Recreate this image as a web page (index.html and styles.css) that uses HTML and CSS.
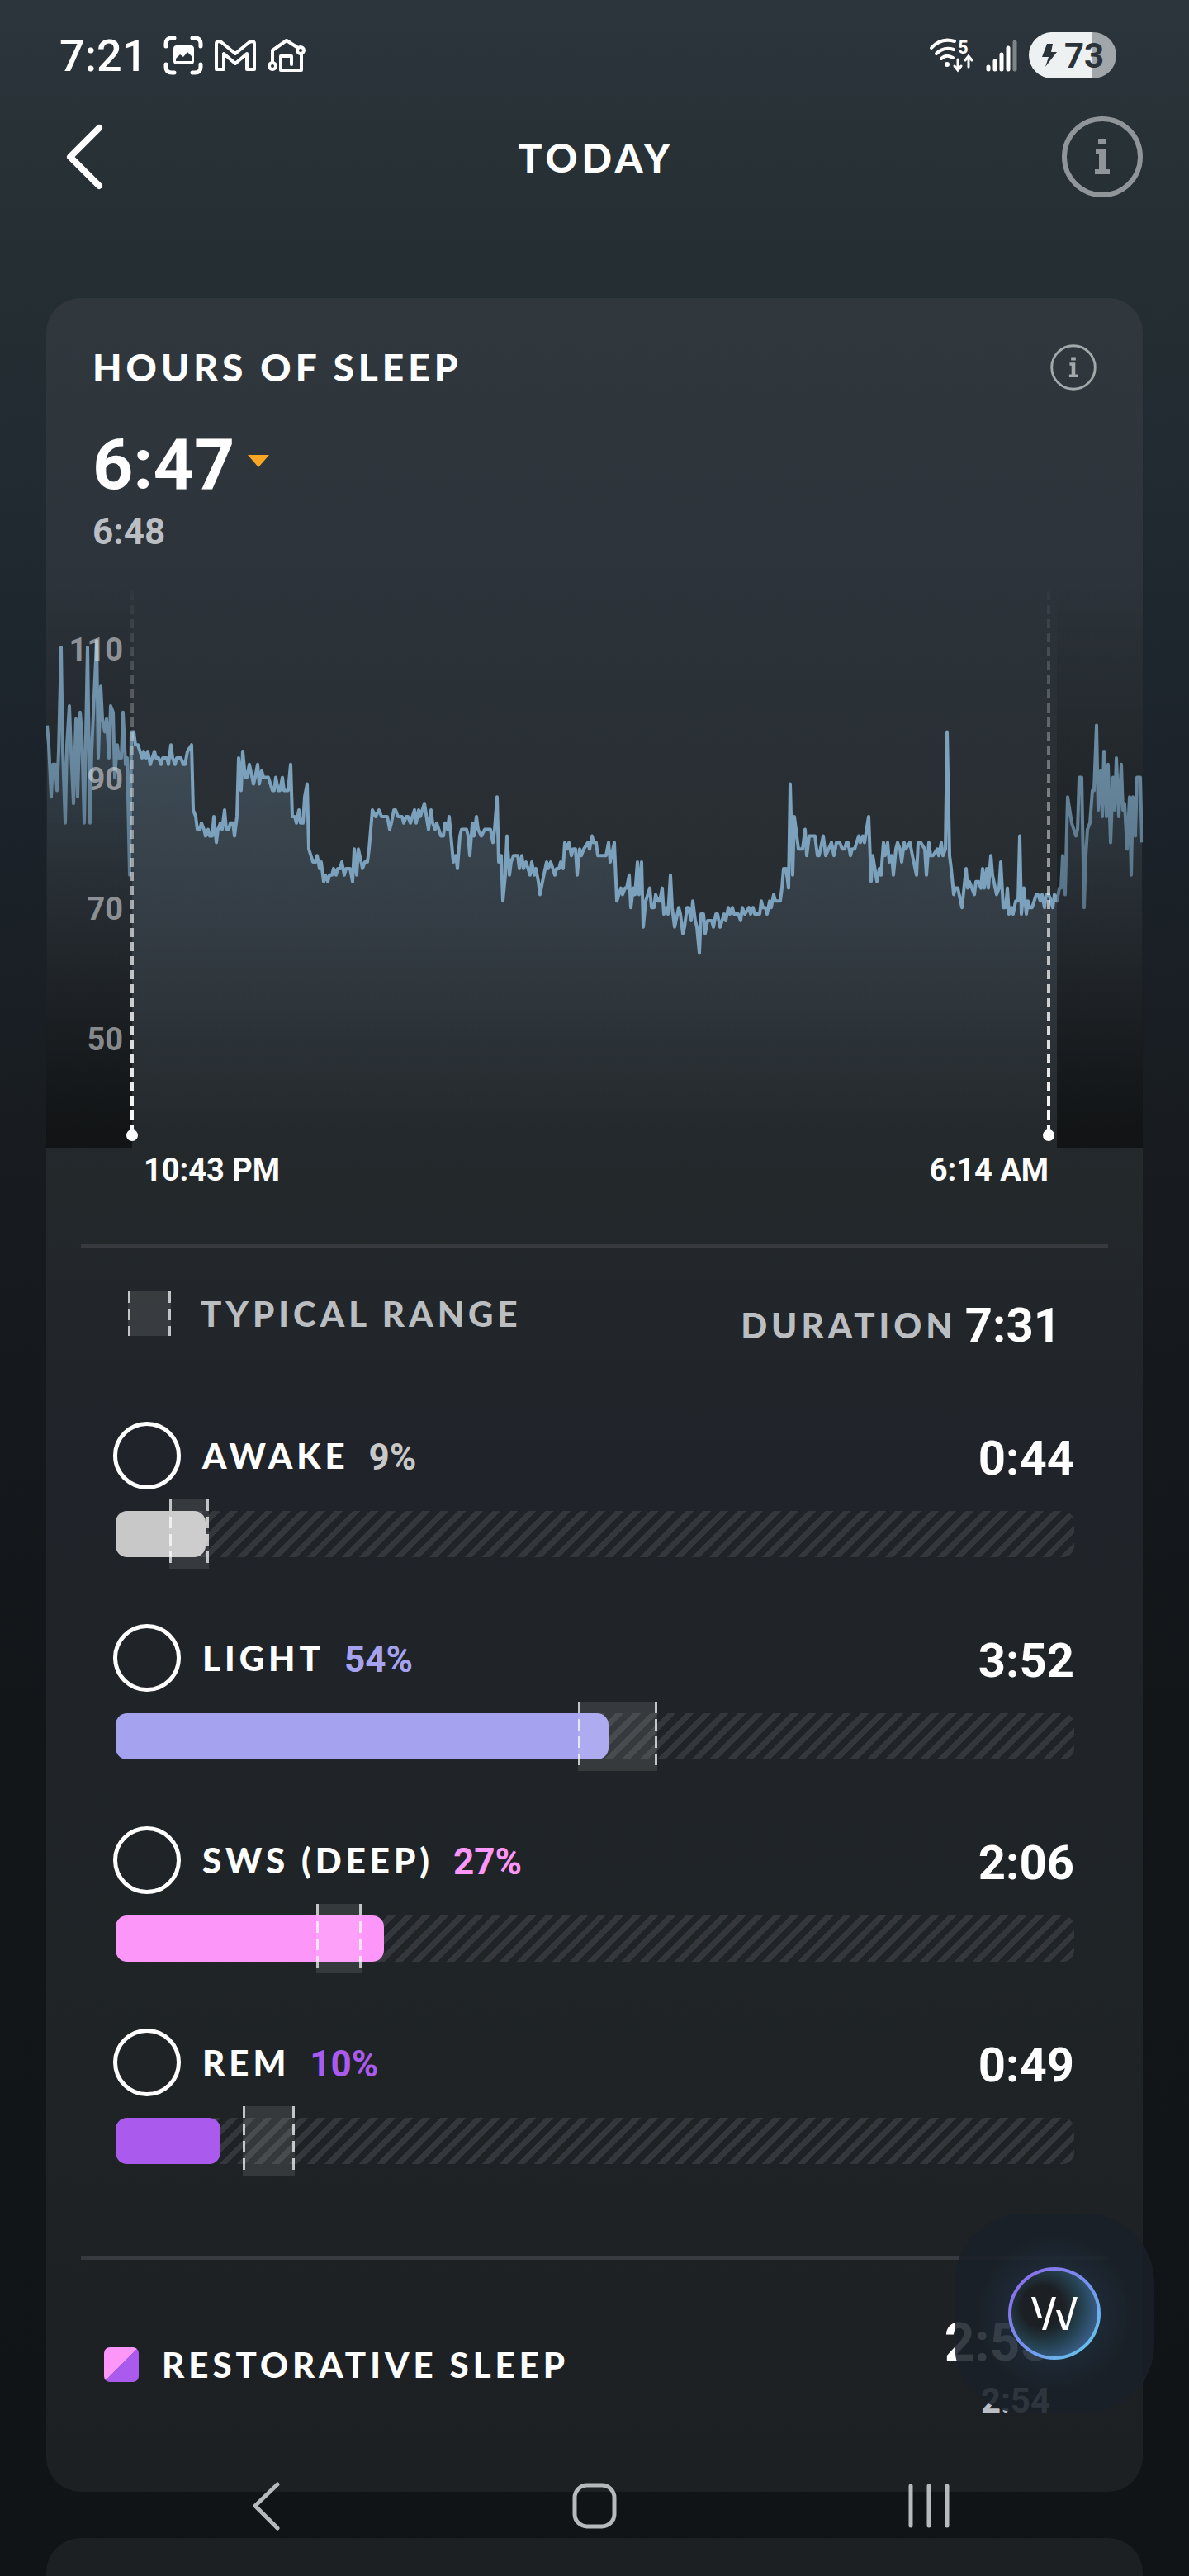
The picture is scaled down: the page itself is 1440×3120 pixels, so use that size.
FILE: index.html
```
<!DOCTYPE html>
<html lang="en">
<head>
    <meta charset="UTF-8">
    <meta name="viewport" content="width=device-width, initial-scale=1.0">
    <title>Hours of Sleep</title>
    <link rel="stylesheet" href="styles.css">
</head>
<body>
    <div class="status-bar">
        <div class="status-left">
            <span class="clock">7:21</span>
            <svg class="status-icon" width="48" height="48" viewBox="0 0 48 48" fill="none" stroke="#fff" stroke-width="5" stroke-linecap="round">
                <path d="M3 13V10Q3 3 10 3H13M35 3H38Q45 3 45 10V13M45 35V38Q45 45 38 45H35M13 45H10Q3 45 3 38V35"/>
                <path fill="#fff" stroke="none" fill-rule="evenodd" d="M16 12H33Q37 12 37 16V31Q37 35 33 35H16Q12 35 12 31V16Q12 12 16 12ZM15 28V31H34V25L29 20L24 26L20 23Z"/>
            </svg>
            <svg class="status-icon" width="50" height="38" viewBox="0 0 50 38" fill="none" stroke="#fff" stroke-width="4" stroke-linejoin="round">
                <path d="M2 5Q2 2 5 2L8 3L25 17L42 3L45 2Q48 2 48 5V36H39V17L25 29L11 17V36H2Z"/>
            </svg>
            <svg class="status-icon" width="46" height="40" viewBox="0 0 46 40" fill="none" stroke="#fff" stroke-width="4" stroke-linejoin="round" stroke-linecap="round">
                <circle cx="6" cy="33" r="4"/>
                <circle cx="40" cy="14" r="4"/>
                <path d="M6 28V14L23 2L37 11M41 19V38H16V21H29V31"/>
            </svg>
        </div>
        <div class="status-right">
            <svg class="wifi" width="54" height="40" viewBox="0 0 54 40" fill="none" stroke="#fff" stroke-width="4" stroke-linecap="round">
                <path d="M2 11Q14 -2 30 3M8 18Q17 9 29 13M14 24Q20 18 28 23"/>
                <circle cx="21" cy="31" r="3" fill="#fff" stroke="none"/>
                <path stroke-width="3" d="M34 25V37M30 33L34 38L38 33M47 34V22M43 26L47 21L51 26"/>
                <text class="wifi-band" x="34" y="18">5</text>
            </svg>
            <svg width="38" height="40" viewBox="0 0 38 40" stroke="#fff" stroke-width="5" stroke-linecap="round">
                <path d="M3 34V37M11 27V37M19 19V37M27 11V37"/>
                <path d="M35 4V37" opacity=".4"/>
            </svg>
            <div class="battery">
                <svg width="20" height="30" viewBox="0 0 20 30" fill="#2b333a">
                    <path d="M7 1H14L12 11H19L5 29L9 17H1Z"/>
                </svg>
                <span>73</span>
            </div>
        </div>
    </div>

    <header class="top-bar">
        <button class="icon-button" aria-label="Back">
            <svg width="48" height="82" viewBox="0 0 48 82" fill="none" stroke="#fff" stroke-width="8" stroke-linecap="round" stroke-linejoin="round">
                <path d="M42 6L7 41L42 76"/>
            </svg>
        </button>
        <h1>TODAY</h1>
        <button class="icon-button" aria-label="About today">
            <svg width="98" height="98" viewBox="0 0 98 98" fill="none" stroke="#8f9599" stroke-width="6">
                <circle cx="49" cy="49" r="46"/>
                <path fill="#8f9599" stroke="none" d="M44 27H54V34H44ZM41 39H53V64H58V70H40V64H45V45H41Z"/>
            </svg>
        </button>
    </header>

    <main>
        <section class="card sleep-card">
            <div class="card-head">
                <h2>HOURS OF SLEEP</h2>
                <button class="icon-button" aria-label="About hours of sleep">
                    <svg width="56" height="56" viewBox="0 0 98 98" fill="none" stroke="#a3a8ab" stroke-width="5">
                        <circle cx="49" cy="49" r="46"/>
                        <path fill="#a3a8ab" stroke="none" d="M44 27H54V34H44ZM41 39H53V64H58V70H40V64H45V45H41Z"/>
                    </svg>
                </button>
            </div>
            <div class="total">
                <span class="total-value">6:47</span>
                <svg class="trend" width="26" height="15" viewBox="0 0 26 15" fill="#faa526"><path d="M0 0H26L13 15Z"/></svg>
            </div>
            <div class="total-average">6:48</div>

            <svg class="chart" viewBox="0 0 1328 690" role="img" aria-label="Heart rate during sleep">
                <defs>
                    <linearGradient id="areaFill" gradientUnits="userSpaceOnUse" x1="0" y1="180" x2="0" y2="670">
                        <stop offset="0" stop-color="#7ba1bc" stop-opacity=".26"/>
                        <stop offset=".5" stop-color="#7b93b0" stop-opacity=".15"/>
                        <stop offset="1" stop-color="#7b93b0" stop-opacity="0"/>
                    </linearGradient>
                    <linearGradient id="shadeFill" x1="0" y1="0" x2="0" y2="1">
                        <stop offset="0" stop-color="#000" stop-opacity="0"/>
                        <stop offset=".5" stop-color="#000" stop-opacity=".25"/>
                        <stop offset="1" stop-color="#000" stop-opacity=".52"/>
                    </linearGradient>
                    <linearGradient id="markerFill" gradientUnits="userSpaceOnUse" x1="0" y1="0" x2="0" y2="670">
                        <stop offset="0" stop-color="#fff" stop-opacity="0"/>
                        <stop offset=".5" stop-color="#fff" stop-opacity=".5"/>
                        <stop offset="1" stop-color="#fff"/>
                    </linearGradient>
                </defs>
                <path id="area" fill="url(#areaFill)"/>
                <path id="line" class="chart-line"/>
                <rect x="0" y="0" width="104" height="690" fill="url(#shadeFill)"/>
                <rect x="1224" y="0" width="104" height="690" fill="url(#shadeFill)"/>
                <g class="axis">
                    <text x="93" y="100">110</text>
                    <text x="93" y="257">90</text>
                    <text x="93" y="414">70</text>
                    <text x="93" y="572">50</text>
                </g>
                <path class="marker" d="M104 16V672L105 672M1214 16V672L1215 672" stroke="url(#markerFill)"/>
                <circle cx="104" cy="675" r="7" fill="#fff"/>
                <circle cx="1214" cy="675" r="7" fill="#fff"/>
            </svg>
            <div class="times">
                <span>10:43 PM</span>
                <span>6:14 AM</span>
            </div>

            <hr>

            <div class="legend">
                <div class="legend-range">
                    <span class="swatch"></span>
                    <span>TYPICAL RANGE</span>
                </div>
                <div class="legend-duration">
                    <span>DURATION</span>
                    <span class="duration">7:31</span>
                </div>
            </div>

            <div class="stages">
                <div class="stage awake">
                    <div class="stage-head">
                        <input type="checkbox" id="awake">
                        <label for="awake">AWAKE</label>
                        <span class="percent">9%</span>
                        <span class="duration">0:44</span>
                    </div>
                    <div class="track">
                        <div class="fill" style="width: 9.4%"></div>
                        <div class="range" style="left: 5.6%; width: 4.1%"></div>
                    </div>
                </div>
                <div class="stage light">
                    <div class="stage-head">
                        <input type="checkbox" id="light">
                        <label for="light">LIGHT</label>
                        <span class="percent">54%</span>
                        <span class="duration">3:52</span>
                    </div>
                    <div class="track">
                        <div class="fill" style="width: 51.4%"></div>
                        <div class="range" style="left: 48.2%; width: 8.3%"></div>
                    </div>
                </div>
                <div class="stage deep">
                    <div class="stage-head">
                        <input type="checkbox" id="deep">
                        <label for="deep">SWS (DEEP)</label>
                        <span class="percent">27%</span>
                        <span class="duration">2:06</span>
                    </div>
                    <div class="track">
                        <div class="fill" style="width: 28%"></div>
                        <div class="range" style="left: 20.9%; width: 4.8%"></div>
                    </div>
                </div>
                <div class="stage rem">
                    <div class="stage-head">
                        <input type="checkbox" id="rem">
                        <label for="rem">REM</label>
                        <span class="percent">10%</span>
                        <span class="duration">0:49</span>
                    </div>
                    <div class="track">
                        <div class="fill" style="width: 10.9%"></div>
                        <div class="range" style="left: 13.3%; width: 5.4%"></div>
                    </div>
                </div>
            </div>

            <hr>

            <div class="restorative">
                <span class="restorative-swatch"></span>
                <span class="restorative-label">RESTORATIVE SLEEP</span>
                <div class="restorative-values">
                    <span class="current">2:55</span>
                    <span class="average">2:54</span>
                </div>
            </div>
        </section>

        <section class="card next-card"></section>
    </main>

    <div class="coach">
        <button class="coach-button" aria-label="Open coach">
            <svg width="56" height="40" viewBox="0 0 56 40" fill="#fff">
                <path d="M0 0H5L13 25H8ZM25 0H30L18 40H13ZM30 16H35L42 35L51 0H56L44 40H38Z"/>
            </svg>
        </button>
    </div>

    <nav class="system-nav">
        <button class="icon-button" aria-label="System back">
            <svg width="36" height="60" viewBox="0 0 36 60" fill="none" stroke="#b7babc" stroke-width="5" stroke-linecap="round" stroke-linejoin="round">
                <path d="M32 4L5 30L32 57"/>
            </svg>
        </button>
        <button class="icon-button" aria-label="Home">
            <svg width="54" height="56" viewBox="0 0 54 56" fill="none" stroke="#b7babc" stroke-width="5">
                <rect x="3" y="3" width="48" height="50" rx="15"/>
            </svg>
        </button>
        <button class="icon-button" aria-label="Recent apps">
            <svg width="50" height="56" viewBox="0 0 50 56" fill="none" stroke="#b7babc" stroke-width="5" stroke-linecap="round">
                <path d="M3 4V52M25 4V52M47 4V52"/>
            </svg>
        </button>
    </nav>

    <script>
        // [x, bpm] samples
        const samples = [
            [1,98],[3,95],[6,87],[8,92],[11,92],[13,88],[15,94],[18,110],[20,94],[23,83],[25,95],[28,101],[30,94],[33,86],[36,99],[38,87],
            [41,100],[43,97],[46,83],[50,110],[53,83],[55,94],[61,111],[63,93],[66,104],[68,99],[71,97],[73,99],[76,93],[78,101],[81,100],[83,90],
            [86,95],[88,93],[91,93],[93,100],[96,92],[98,93],[101,75],[103,97],[106,97],[108,95],[111,95],[116,93],[118,94],[121,93],[123,94],[126,92],
            [131,94],[133,93],[136,93],[139,92],[141,93],[146,93],[148,92],[151,95],[153,93],[156,92],[158,93],[163,93],[166,92],[168,92],[171,94],[176,95],
            [178,85],[181,84],[183,82],[186,82],[188,83],[191,82],[193,81],[196,82],[198,81],[201,81],[203,84],[206,80],[208,82],[211,83],[213,82],[216,85],
            [218,82],[221,82],[223,83],[226,83],[228,81],[231,84],[233,93],[236,88],[238,94],[241,90],[243,90],[246,92],[251,89],[253,90],[256,92],[258,89],
            [261,91],[263,90],[269,90],[274,88],[276,88],[278,90],[281,88],[283,88],[286,90],[288,88],[293,88],[296,92],[298,84],[301,84],[303,83],[306,85],
            [308,83],[311,83],[313,87],[316,89],[318,79],[323,77],[326,77],[328,78],[331,76],[333,77],[336,74],[338,75],[341,74],[343,75],[346,75],[348,76],
            [351,75],[353,76],[356,76],[358,77],[361,75],[363,76],[368,76],[371,74],[373,79],[376,75],[378,79],[383,76],[386,77],[389,77],[391,79],[395,85],
            [399,84],[403,85],[406,84],[413,84],[416,82],[418,83],[421,85],[423,85],[426,84],[431,84],[433,83],[436,84],[438,84],[441,83],[446,85],[448,83],
            [451,85],[453,84],[458,86],[463,82],[466,85],[468,83],[471,82],[473,83],[478,81],[481,81],[483,83],[486,82],[488,84],[493,77],[496,78],[498,76],
            [501,81],[503,82],[509,82],[511,81],[513,78],[516,83],[518,81],[521,84],[523,82],[527,81],[531,82],[538,82],[541,80],[543,82],[546,87],[548,77],
            [551,78],[553,71],[556,75],[558,81],[561,75],[563,77],[566,78],[571,78],[573,76],[576,78],[578,76],[581,77],[586,75],[588,77],[591,75],[593,76],
            [596,74],[598,72],[601,74],[606,77],[608,76],[611,77],[616,75],[618,76],[621,76],[623,77],[626,76],[628,80],[631,79],[633,80],[636,78],[638,79],
            [641,79],[643,75],[646,79],[648,78],[651,79],[656,80],[658,79],[661,81],[663,80],[666,80],[668,78],[678,78],[681,80],[683,77],[688,80],[691,71],
            [696,73],[698,72],[701,73],[703,73],[706,75],[708,70],[711,73],[713,72],[716,77],[718,72],[721,77],[723,67],[726,71],[731,73],[733,70],[736,70],
            [738,72],[741,71],[743,71],[746,73],[748,69],[751,70],[753,69],[756,75],[758,70],[761,67],[766,70],[768,69],[771,66],[773,67],[776,70],[778,70],
            [781,68],[783,71],[786,68],[788,67],[791,63],[793,69],[796,69],[798,66],[801,68],[806,68],[808,67],[811,69],[813,69],[816,67],[821,69],[823,68],
            [826,70],[828,69],[831,70],[833,69],[838,69],[841,68],[843,70],[846,69],[851,70],[853,69],[856,70],[858,69],[864,69],[866,71],[868,70],[871,70],
            [873,69],[876,71],[878,70],[881,72],[883,71],[889,71],[891,73],[893,76],[896,76],[899,73],[901,89],[904,75],[906,84],[911,79],[916,79],[919,82],
            [921,78],[924,81],[931,81],[934,78],[936,78],[941,81],[944,78],[951,80],[954,78],[957,80],[961,80],[964,79],[967,79],[969,80],[971,80],[974,78],
            [976,79],[979,79],[984,81],[986,80],[989,81],[991,80],[996,84],[999,74],[1001,78],[1006,74],[1009,76],[1011,75],[1014,80],[1016,78],[1019,80],[1021,77],
            [1024,78],[1026,75],[1029,79],[1031,80],[1034,79],[1036,77],[1039,80],[1041,79],[1046,80],[1049,78],[1054,75],[1056,80],[1059,80],[1064,79],[1066,75],[1069,80],
            [1071,78],[1074,78],[1079,79],[1081,78],[1084,80],[1086,78],[1089,79],[1091,97],[1094,78],[1096,76],[1099,72],[1101,73],[1104,73],[1109,70],[1114,76],[1116,73],
            [1118,74],[1124,72],[1126,74],[1129,74],[1132,73],[1134,76],[1136,73],[1139,76],[1141,73],[1144,78],[1146,75],[1151,72],[1154,73],[1156,77],[1159,70],[1162,70],
            [1164,73],[1166,69],[1169,70],[1171,69],[1174,71],[1177,71],[1179,81],[1181,69],[1184,73],[1187,69],[1189,71],[1191,70],[1194,70],[1199,72],[1201,72],[1204,71],
            [1206,72],[1209,70],[1211,72],[1214,72],[1217,71],[1219,70],[1221,72],[1224,71],[1227,73],[1229,73],[1231,78],[1234,72],[1237,87],[1242,83],[1247,81],[1249,82],
            [1251,90],[1254,90],[1257,70],[1259,78],[1261,82],[1264,83],[1267,88],[1269,88],[1272,98],[1274,85],[1277,91],[1279,84],[1281,94],[1284,84],[1286,92],[1289,80],
            [1292,90],[1294,85],[1296,93],[1299,84],[1302,92],[1304,85],[1306,86],[1309,79],[1312,87],[1314,75],[1316,87],[1319,81],[1321,90],[1325,90],[1327,80]
        ];

        function bpmToY(bpm) {
            return 84 + (110 - bpm) * 7.88;
        }

        const points = samples.map(([x, bpm]) => x + ' ' + bpmToY(bpm).toFixed(1)).join('L');
        document.getElementById('line').setAttribute('d', 'M' + points);
        document.getElementById('area').setAttribute('d', 'M0 690L' + points + 'L1328 690Z');
    </script>
</body>
</html>
```
FILE: styles.css
```
* {
    box-sizing: border-box;
}

body {
    margin: 0;
    min-height: 100vh;
    background: linear-gradient(#2c353c 0, #262f33 260px, #212a31 600px, #1b2229 1000px, #171b1f 1450px, #121619 2100px, #101416 3120px);
    color: white;
    font-family: Roboto, 'Liberation Sans', sans-serif;
    font-weight: 700;
}

svg {
    display: block;
}

h1, h2 {
    margin: 0;
}

h1, h2, label, .legend, .restorative-label {
    font-family: Lato, 'Open Sans', sans-serif;
    font-weight: 900;
    letter-spacing: 5px;
}

.icon-button {
    padding: 0;
    border: none;
    background: none;
    cursor: pointer;
}

/* status bar */
.status-bar {
    display: flex;
    justify-content: space-between;
    align-items: center;
    height: 134px;
    padding: 0 88px 0 72px;
}

.status-left, .status-right {
    display: flex;
    align-items: center;
    gap: 14px;
}

.clock {
    margin-right: 6px;
    font-size: 54px;
    font-weight: 500;
}

.wifi {
    overflow: visible;
}

.wifi-band {
    fill: white;
    stroke: none;
    font-size: 22px;
}

.battery {
    display: flex;
    align-items: center;
    justify-content: center;
    gap: 8px;
    width: 106px;
    height: 56px;
    border-radius: 28px;
    background: linear-gradient(90deg, #eef1f1 73%, #a1a6aa 73%);
    color: #2b333a;
    font-size: 42px;
}

/* page header */
.top-bar {
    display: grid;
    grid-template-columns: 98px 1fr 98px;
    align-items: center;
    height: 112px;
    padding: 0 56px 0 78px;
}

.top-bar h1 {
    padding-right: 18px;
    font-size: 48px;
    text-align: center;
}

main {
    padding: 115px 56px 0;
}

.card {
    border-radius: 42px;
}

.sleep-card {
    padding-bottom: 90px;
    background: linear-gradient(#30383e 0, #2c333a 340px, #282e32 640px, #23282b 1090px, #20242a 1400px, #1f2427 2000px, #1d2023 2656px);
}

.next-card {
    height: 46px;
    margin-top: 56px;
    border-radius: 42px 42px 0 0;
    background-color: #1c2022;
}

.card-head {
    display: flex;
    justify-content: space-between;
    align-items: center;
    padding: 56px 56px 0;
}

.card-head h2 {
    font-size: 46px;
    line-height: 56px;
}

.total {
    display: flex;
    align-items: center;
    gap: 16px;
    margin-top: 48px;
    padding: 0 56px;
}

.total-value {
    font-size: 86px;
    line-height: 84px;
}

.trend {
    margin-bottom: 10px;
}

.total-average {
    margin: 15px 0 32px;
    padding: 0 56px;
    color: #bbbfc3;
    font-size: 44px;
    line-height: 48px;
}

/* heart rate chart */
.chart {
    width: 100%;
    height: auto;
}

.chart-line {
    fill: none;
    stroke: #7ba1bc;
    stroke-width: 4;
    stroke-linejoin: round;
}

.axis {
    fill: #e8eaec;
    fill-opacity: .55;
    font-size: 38px;
    text-anchor: end;
}

.marker {
    fill: none;
    stroke-width: 4;
    stroke-dasharray: 11 6;
}

.times {
    display: flex;
    justify-content: space-between;
    padding: 3px 114px 0 118px;
    font-size: 38px;
    line-height: 48px;
}

hr {
    height: 4px;
    margin: 66px 42px 0;
    border: none;
    background-color: #373b3f;
}

/* legend */
.legend {
    display: flex;
    justify-content: space-between;
    align-items: flex-start;
    margin-top: 53px;
    padding: 0 99px;
    color: #bbbec1;
    font-size: 42px;
}

.legend-range, .legend-duration {
    display: flex;
    align-items: center;
}

.legend-range {
    gap: 36px;
    height: 54px;
}

.legend-duration {
    gap: 10px;
    padding-top: 12px;
    line-height: 58px;
}

.duration {
    color: white;
    font-family: Roboto, 'Liberation Sans', sans-serif;
    font-size: 58px;
    font-weight: 700;
    line-height: 58px;
    letter-spacing: normal;
}

/* dashed edges around the typical range */
.swatch, .range {
    background-color: rgba(255, 255, 255, .1);
    background-image:
        repeating-linear-gradient(rgba(255, 255, 255, .7) 0 14px, transparent 14px 21px),
        repeating-linear-gradient(rgba(255, 255, 255, .7) 0 14px, transparent 14px 21px);
    background-position: left top, right top;
    background-repeat: no-repeat;
    background-size: 3px 100%;
}

.swatch {
    width: 52px;
    height: 54px;
}

/* sleep stages */
.stages {
    display: flex;
    flex-direction: column;
    gap: 81px;
    margin-top: 88px;
    padding: 0 83px 0 84px;
}

.stage-head {
    display: flex;
    align-items: center;
    height: 82px;
    margin-bottom: 26px;
}

.stage-head input {
    appearance: none;
    width: 82px;
    height: 82px;
    margin: 0 26px 0 -3px;
    border: 5px solid white;
    border-radius: 50%;
}

.stage-head input:checked {
    background-color: #7ba1bc;
}

.stage-head label {
    font-size: 42px;
}

.percent {
    margin-left: 24px;
    padding-top: 4px;
    font-size: 44px;
}

.stage-head .duration {
    margin-left: auto;
    padding-top: 6px;
}

.track {
    position: relative;
    height: 56px;
    border-radius: 14px;
    background: repeating-linear-gradient(135deg, transparent 0 8px, #34383c 8px 15px);
}

.fill {
    height: 100%;
    border-radius: 14px;
}

.range {
    position: absolute;
    top: -14px;
    bottom: -14px;
}

.awake .fill { background-color: #c8c8c8; }
.awake .percent { color: #c8c8c8; }
.light .fill { background-color: #a5a2f0; }
.light .percent { color: #a5a2f0; }
.deep .fill { background-color: #fc96f9; }
.deep .percent { color: #fc96f9; }
.rem .fill { background-color: #aa5aec; }
.rem .percent { color: #aa5aec; }

.stages + hr {
    margin-top: 112px;
}

/* restorative sleep */
.restorative {
    display: flex;
    align-items: center;
    margin-top: 63px;
    padding: 0 112px 0 70px;
}

.restorative-swatch {
    width: 42px;
    height: 42px;
    margin-right: 28px;
    border-radius: 7px;
    background: linear-gradient(135deg, #fc96f9 50%, #aa5aec 50%);
}

.restorative-label {
    font-size: 42px;
}

.restorative-values {
    display: flex;
    flex-direction: column;
    gap: 12px;
    margin-left: auto;
    text-align: right;
}

.current {
    font-size: 64px;
    line-height: 76px;
}

.average {
    color: #bbbfc3;
    font-size: 42px;
    line-height: 40px;
}

/* floating coach button */
.coach {
    position: fixed;
    right: 42px;
    bottom: 197px;
    display: flex;
    align-items: center;
    justify-content: center;
    width: 242px;
    height: 242px;
    border-radius: 84px;
    background: radial-gradient(circle, rgba(29, 42, 55, .9) 56px, rgba(26, 32, 40, .87) 95px);
}

.coach-button {
    display: flex;
    align-items: center;
    justify-content: center;
    width: 112px;
    height: 112px;
    padding: 0;
    border: 4px solid transparent;
    border-radius: 50%;
    background:
        radial-gradient(circle at 36% 42%, #1c2024 28%, #24404e 52%, #3a5f8c 78%) padding-box,
        linear-gradient(135deg, #8a72ec 15%, #7590f0 50%, #66c4ea 90%) border-box;
    cursor: pointer;
}

/* system navigation */
.system-nav {
    position: fixed;
    right: 0;
    bottom: 54px;
    left: 0;
    display: flex;
    justify-content: space-between;
    align-items: center;
    height: 62px;
    padding: 0 290px 0 304px;
}
```
